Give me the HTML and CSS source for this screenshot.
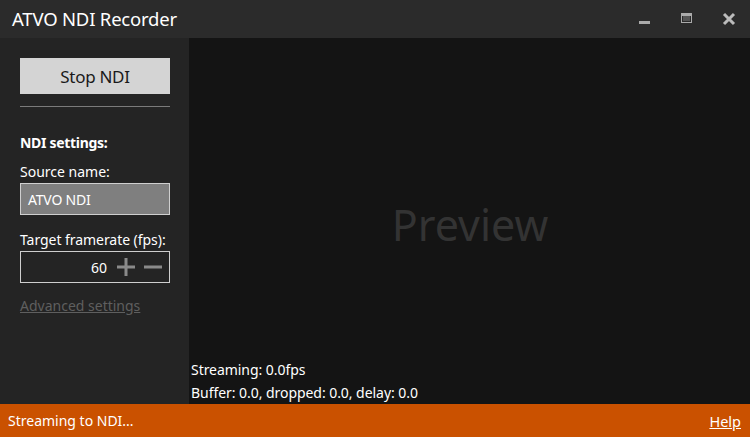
FILE: index.html
```html
<!DOCTYPE html>
<html>
<head>
<meta charset="utf-8">
<link rel="stylesheet" href="styles.css">
</head>
<body>
<div class="window">
  <header class="titlebar">
    <div class="title">ATVO NDI Recorder</div>
    <div class="controls">
      <span class="ctl"><svg width="12" height="12" viewBox="0 0 12 12"><rect x="0" y="8" width="11" height="3" fill="#aaa"/></svg></span>
      <span class="ctl"><svg width="12" height="12" viewBox="0 0 12 12"><rect x="0.5" y="0.5" width="10" height="9" fill="none" stroke="#aaa" stroke-width="1"/><rect x="0" y="0" width="11" height="3" fill="#aaa"/><rect x="2" y="3" width="7" height="5" fill="#555"/></svg></span>
      <span class="ctl"><svg width="14" height="14" viewBox="0 0 14 14"><path d="M2 2 L12 12 M12 2 L2 12" stroke="#bbb" stroke-width="3"/></svg></span>
    </div>
  </header>
  <div class="main">
    <aside class="sidebar">
      <button class="stop">Stop NDI</button>
      <hr class="sep">
      <div class="heading">NDI settings:</div>
      <div class="label">Source name:</div>
      <div class="input">ATVO NDI</div>
      <div class="label label2">Target framerate (fps):</div>
      <div class="num">
        <span class="val">60</span>
        <svg class="pm" width="18" height="18" viewBox="0 0 18 18"><path d="M0 9 H18 M9 0 V18" stroke="#8a8a8a" stroke-width="3"/></svg>
        <svg class="pm" width="18" height="18" viewBox="0 0 18 18"><path d="M0 9 H18" stroke="#8a8a8a" stroke-width="3"/></svg>
      </div>
      <a class="adv">Advanced settings</a>
    </aside>
    <section class="preview">
      <div class="ptext">Preview</div>
      <div class="stats">
        <div>Streaming: 0.0fps</div>
        <div>Buffer: 0.0, dropped: 0.0, delay: 0.0</div>
      </div>
    </section>
  </div>
  <footer class="status">
    <span>Streaming to NDI...</span>
    <a class="help">Help</a>
  </footer>
</div>
</body>
</html>
```
FILE: styles.css
```css
* { box-sizing: border-box; }
html, body { margin: 0; padding: 0; }
body { width: 750px; height: 437px; overflow: hidden; font-family: "Noto Sans", "Open Sans", sans-serif; color: #fff; background: #141414; }
.window { display: flex; flex-direction: column; height: 437px; }
.titlebar { height: 38px; background: #2b2b2b; display: flex; align-items: center; justify-content: space-between; padding-left: 12px; }
.title { font-size: 18.5px; letter-spacing: -0.2px; color: #fff; margin-top: -1px; }
.controls { display: flex; height: 38px; }
.ctl { width: 42px; display: flex; align-items: center; justify-content: center; }
.main { flex: 1; display: flex; min-height: 0; }
.sidebar { width: 189px; background: #242424; padding: 20px 19px 0 20px; display: flex; flex-direction: column; }
.stop { width: 150px; height: 36px; background: #d4d4d4; border: none; font-family: inherit; font-size: 17px; color: #1a1a1a; letter-spacing: -0.3px; padding: 0; }
.sep { border: none; border-top: 1px solid #7a7a7a; margin: 12px 0 0 0; width: 150px; }
.heading { font-weight: bold; font-size: 14px; margin-top: 26px; letter-spacing: -0.3px; line-height: 20px; }
.label { font-size: 14px; margin-top: 9px; line-height: 20px; white-space: nowrap; }
.label2 { margin-top: 15px; letter-spacing: -0.05px; }
.input { width: 150px; height: 32px; margin-top: 1px; background: #7f7f7f; border: 1px solid #cfcfcf; font-size: 14px; letter-spacing: -0.2px; padding-left: 7px; display: flex; align-items: center; }
.num { width: 150px; height: 32px; margin-top: 1px; border: 1px solid #cfcfcf; display: flex; align-items: center; justify-content: flex-end; padding-right: 7px; gap: 9px; font-size: 14px; }
.val { margin-right: 1px; }
.adv { margin-top: 13px; font-size: 14px; color: #5f5f5f; text-decoration: underline; }
.preview { flex: 1; display: flex; flex-direction: column; position: relative; background: #141414; }
.ptext { flex: 1; display: flex; align-items: center; justify-content: center; font-size: 43px; color: #333; padding-top: 6px; padding-left: 1px; }
.stats { position: absolute; left: 2px; bottom: 0; font-size: 14px; line-height: 23px; letter-spacing: -0.05px; }
.status { height: 33px; background: #ca5100; display: flex; align-items: center; justify-content: space-between; padding: 0 9px 0 8px; font-size: 14px; }
.help { color: #fff; text-decoration: underline; font-size: 14.5px; }
```
